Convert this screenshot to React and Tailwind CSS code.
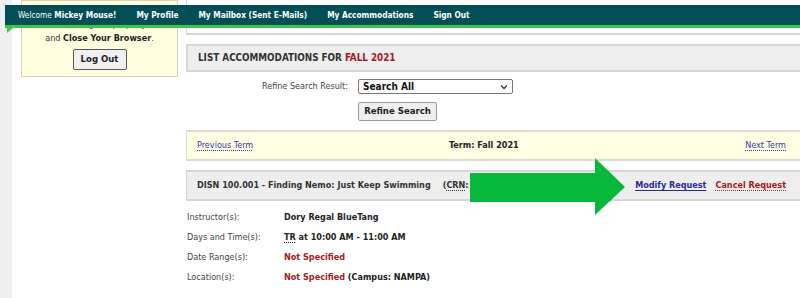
import React from 'react';

const details = [
  { label: 'Instructor(s):', value: <span className="font-bold text-[#222]">Dory Regal BlueTang</span> },
  {
    label: 'Days and Time(s):',
    value: (
      <span className="font-bold text-[#222]">
        <abbr title="Tuesday, Thursday" className="underline decoration-dotted underline-offset-2">TR</abbr> at 10:00 AM - 11:00 AM
      </span>
    ),
  },
  { label: 'Date Range(s):', value: <span className="font-bold text-[#a3201c]">Not Specified</span> },
  {
    label: 'Location(s):',
    value: (
      <span className="font-bold text-[#222]">
        <span className="text-[#a3201c]">Not Specified</span> (Campus: NAMPA)
      </span>
    ),
  },
];

function TopNav() {
  return (
    <nav className="absolute left-[5px] top-[5px] right-0 h-[23px] bg-[#014e56] border-b-[3px] border-[#3cc34b] flex items-center pl-[13px] gap-[20px] text-white text-[8.25px] font-bold">
      <span>
        <span className="font-normal">Welcome </span>Mickey Mouse!
      </span>
      <span>My Profile</span>
      <span>My Mailbox (Sent E-Mails)</span>
      <span>My Accommodations</span>
      <span>Sign Out</span>
    </nav>
  );
}

function GreenArrow() {
  return (
    <svg className="absolute left-[470px] top-[157px]" width="158" height="60" viewBox="0 0 158 60">
      <polygon points="0,16 125,16 125,1 155,30 125,58 125,45 0,45" fill="#08b83a" />
    </svg>
  );
}

export default function App() {
  return (
    <div className="relative w-[800px] h-[298px] overflow-hidden bg-white text-[#333] font-['DejaVu_Sans_Condensed','DejaVu_Sans',sans-serif] text-[9px]">
      <div className="flex h-full">
        <div className="w-[12px] shrink-0 bg-[#efefef]" />

        <aside className="w-[174px] shrink-0 pl-[9px]">
          <div className="w-[157px] h-[77px] border border-[#d4d4b8] bg-[#ffffe0] flex flex-col items-center pt-[17px]">
            <p className="leading-[13px] whitespace-nowrap">Please log out properly</p>
            <p className="leading-[14px] whitespace-nowrap">
              and <span className="font-bold text-[#222]">Close Your Browser</span>.
            </p>
            <button className="mt-[4px] w-[54px] h-[21px] border border-[#555] rounded-[2px] bg-[#f0f0f0] font-bold text-[9.5px] text-[#222]">
              Log Out
            </button>
          </div>
        </aside>

        <main className="w-[624px] shrink-0">
          <div className="h-[35px] border-x border-b-2 border-[#d6d6d6]" />

          <div className="mt-[9px] h-[28px] bg-[#eeeeee] border-y-2 border-l-2 border-[#d6d6d6] flex items-center pl-[10px] font-bold text-[9.8px] text-[#333]">
            LIST ACCOMMODATIONS FOR&nbsp;<span className="text-[#a31a1e]">FALL 2021</span>
          </div>

          <div className="mt-[7px] flex items-center h-[15px]">
            <span className="w-[162px] text-right text-[#444]">Refine Search Result:</span>
            <div className="ml-[10px] w-[155px] h-[15px] border border-[#777] rounded-[2px] flex items-center justify-between pl-[4px] pr-[4px]">
              <span className="font-bold text-[10px] text-[#111]">Search All</span>
              <svg width="8" height="6" viewBox="0 0 8 6">
                <path d="M1 1.5 L4 4.5 L7 1.5" fill="none" stroke="#333" strokeWidth="1.3" />
              </svg>
            </div>
          </div>

          <div className="mt-[8px] pl-[172px]">
            <button className="w-[79px] h-[19px] border border-[#999] rounded-[2px] bg-[#efefef] font-bold text-[9.5px] text-[#222]">
              Refine Search
            </button>
          </div>

          <div className="mt-[9px] h-[31px] bg-[#ffffe3] border-y-2 border-l border-[#dcdcd0] flex items-center pl-[10px] pr-[24px]">
            <a className="w-[252px] text-[#3b3ba6] underline decoration-dotted underline-offset-2">Previous Term</a>
            <span className="font-bold text-[#222]">Term: Fall 2021</span>
            <a className="ml-auto text-[#3b3ba6] underline decoration-dotted underline-offset-2">Next Term</a>
          </div>

          <div className="mt-[9px] h-[31px] bg-[#eeeeee] border-y-2 border-l border-[#d6d6d6] flex items-center pl-[10px] pr-[24px] font-bold text-[9px]">
            <span className="text-[#333]">DISN 100.001 - Finding Nemo: Just Keep Swimming</span>
            <span className="ml-[12px] text-[#333]">
              (<abbr className="underline decoration-dotted underline-offset-2">CRN</abbr>: 48211)
            </span>
            <a className="ml-auto text-[#2a2a9c] underline underline-offset-2">Modify Request</a>
            <a className="ml-[9px] text-[#a3201c] underline decoration-dotted underline-offset-2">Cancel Request</a>
          </div>

          <div className="mt-[7px] flex flex-col">
            {details.map((row) => (
              <div key={row.label} className="h-[20px] flex items-center">
                <span className="w-[98px] pl-[1px] text-[#444]">{row.label}</span>
                {row.value}
              </div>
            ))}
          </div>
        </main>
      </div>

      <TopNav />
      <svg className="absolute left-[7px] top-[27px]" width="8" height="7" viewBox="0 0 8 7">
        <polygon points="0,0 7,0 0,6" fill="#3cc34b" />
      </svg>
      <GreenArrow />
    </div>
  );
}
